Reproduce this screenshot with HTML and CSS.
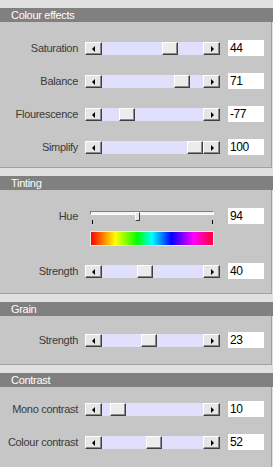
FILE: index.html
```html
<!DOCTYPE html>
<html>
    <head>
        <link rel="stylesheet" href="styles.css">
    </head>
    <body>
      <div class="group">
        <div class="groupTitle">Colour effects</div>
        <div class="panel">
          <div class="row">
            <span class="label">Saturation</span>
            <div class="scroll"><span class="btn btnLeft"></span><div class="track"><span class="thumb" style="left:60px"></span></div><span class="btn btnRight"></span></div>
            <span class="value">44</span>
          </div>
          <div class="row">
            <span class="label">Balance</span>
            <div class="scroll"><span class="btn btnLeft"></span><div class="track"><span class="thumb" style="left:72px"></span></div><span class="btn btnRight"></span></div>
            <span class="value">71</span>
          </div>
          <div class="row">
            <span class="label">Flourescence</span>
            <div class="scroll"><span class="btn btnLeft"></span><div class="track"><span class="thumb" style="left:17px"></span></div><span class="btn btnRight"></span></div>
            <span class="value">-77</span>
          </div>
          <div class="row">
            <span class="label">Simplify</span>
            <div class="scroll"><span class="btn btnLeft"></span><div class="track"><span class="thumb" style="left:85px"></span></div><span class="btn btnRight"></span></div>
            <span class="value">100</span>
          </div>
        </div>
      </div>

      <div class="group">
        <div class="groupTitle">Tinting</div>
        <div class="panel panelTint">
          <div class="hueBlock">
            <div class="row">
              <span class="label">Hue</span>
              <div class="hue">
                <div class="hueSlider">
                  <div class="groove"></div>
                  <div class="ticks"><span class="tick"></span><span class="tick"></span></div>
                  <span class="hueThumb" style="left:45px"></span>
                </div>
              </div>
              <span class="value">94</span>
            </div>
            <div class="rainbow"></div>
          </div>
          <div class="row">
            <span class="label">Strength</span>
            <div class="scroll"><span class="btn btnLeft"></span><div class="track"><span class="thumb" style="left:35px"></span></div><span class="btn btnRight"></span></div>
            <span class="value">40</span>
          </div>
        </div>
      </div>

      <div class="group">
        <div class="groupTitle">Grain</div>
        <div class="panel panelGrain">
          <div class="row">
            <span class="label">Strength</span>
            <div class="scroll"><span class="btn btnLeft"></span><div class="track"><span class="thumb" style="left:39px"></span></div><span class="btn btnRight"></span></div>
            <span class="value">23</span>
          </div>
        </div>
      </div>

      <div class="group">
        <div class="groupTitle">Contrast</div>
        <div class="panel panelContrast">
          <div class="row">
            <span class="label">Mono contrast</span>
            <div class="scroll"><span class="btn btnLeft"></span><div class="track"><span class="thumb" style="left:8px"></span></div><span class="btn btnRight"></span></div>
            <span class="value">10</span>
          </div>
          <div class="row">
            <span class="label">Colour contrast</span>
            <div class="scroll"><span class="btn btnLeft"></span><div class="track"><span class="thumb" style="left:44px"></span></div><span class="btn btnRight"></span></div>
            <span class="value">52</span>
          </div>
        </div>
      </div>
    </body>
</html>
```

FILE: styles.css
```css
html, body{
  margin: 0;
  height: 100%;
}
body{
  background-color: #e0e0e0;
  padding-top: 8px;
  box-sizing: border-box;
  font-family: "Liberation Sans", Arial, sans-serif;
  overflow: hidden;
}
.group{
  margin-bottom: 8px;
}
.group:last-child{
  margin-bottom: 0;
}
.groupTitle{
  height: 14px;
  line-height: 14px;
  background-color: #808080;
  color: #fff;
  font-size: 11px;
  letter-spacing: -0.3px;
  padding-left: 11px;
}
.panel{
  display: flex;
  flex-direction: column;
  gap: 17px;
  width: 271px;
  background-color: #c6c6c6;
  border-right: 1px solid #a0a0a0;
  border-bottom: 1px solid #a0a0a0;
  padding: 18px 0 12px;
}
.panelTint{
  padding-bottom: 14px;
}
.panelGrain{
  padding: 16px 0 16px;
}
.panelContrast{
  padding-top: 14px;
  padding-bottom: 40px;
  border-bottom: none;
}
.row{
  display: flex;
  align-items: center;
  height: 16px;
}
.label{
  width: 78px;
  margin-right: 7px;
  text-align: right;
  font-size: 11px;
  letter-spacing: -0.3px;
  color: #3a3a3a;
  white-space: nowrap;
}
.scroll{
  display: flex;
  width: 135px;
  height: 13px;
}
.btn{
  position: relative;
  width: 17px;
  height: 13px;
  box-sizing: border-box;
  background-color: #e6e6e6;
  border: 1px solid;
  border-color: #fff #404040 #404040 #fff;
  box-shadow: inset -1px -1px #8a8a8a;
}
.btn::after{
  content: "";
  position: absolute;
  top: 3px;
  width: 0;
  height: 0;
  border-top: 3px solid transparent;
  border-bottom: 3px solid transparent;
}
.btnLeft::after{
  left: 6px;
  border-right: 3px solid #000;
}
.btnRight::after{
  left: 7px;
  border-left: 3px solid #000;
}
.track{
  position: relative;
  flex: 1;
  background-color: #e0e0fc;
}
.thumb{
  position: absolute;
  top: 0;
  width: 16px;
  height: 13px;
  box-sizing: border-box;
  background-color: #ececec;
  border: 1px solid;
  border-color: #fff #404040 #404040 #fff;
  box-shadow: inset -1px -1px #8a8a8a;
}
.value{
  width: 34px;
  height: 16px;
  margin-left: 8px;
  padding-left: 2px;
  background-color: #fff;
  color: #000;
  font-size: 12px;
  letter-spacing: -0.4px;
  line-height: 16px;
}
.hueBlock{
  display: flex;
  flex-direction: column;
}
.hue{
  width: 135px;
  height: 16px;
}
.hueSlider{
  position: relative;
  margin-left: 5px;
  width: 124px;
  height: 16px;
}
.groove{
  margin-top: 3px;
  height: 2px;
  border: 1px solid;
  border-color: #808080 #fff #fff #808080;
  background-color: #f4f4f4;
}
.ticks{
  display: flex;
  justify-content: space-between;
  padding: 0 1px 0 2px;
  margin-top: 5px;
}
.tick{
  width: 1px;
  height: 4px;
  background-color: #000;
}
.hueThumb{
  position: absolute;
  top: 1px;
  width: 5px;
  height: 9px;
  box-sizing: border-box;
  background-color: #e6e6e6;
  border: 1px solid;
  border-color: #fff #404040 #404040 #fff;
}
.rainbow{
  margin: 7px 0 0 90px;
  width: 124px;
  height: 15px;
  box-sizing: border-box;
  border: 1px solid #ececec;
  background: linear-gradient(to right, #f00, #ff0 20%, #0f0 38%, #0ff 50%, #00f 66%, #f0f 84%, #f03);
}
```
